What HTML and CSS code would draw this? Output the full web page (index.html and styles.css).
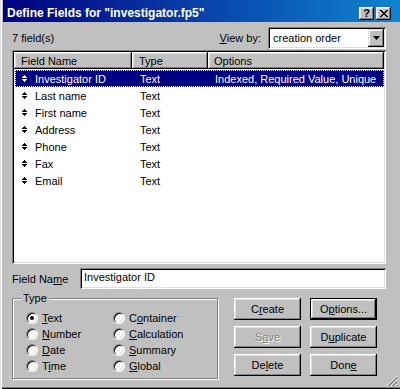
FILE: index.html
```html
<!DOCTYPE html>
<html lang="en">
<head>
    <meta charset="UTF-8">
    <title>Define Fields</title>
    <link rel="stylesheet" href="styles.css">
</head>
<body>
    <div class="window">
        <div class="titlebar">
            <span class="title">Define Fields for "investigator.fp5"</span>
            <div class="caption-btns">
                <span class="cbtn help">?</span>
                <span class="cbtn">
                    <svg width="8" height="7" viewBox="0 0 8 7"><path d="M0 0h2v1h1v1h2v-1h1v-1h2v1h-1v1h-1v1h-1v1h1v1h1v1h1v1h-2v-1h-1v-1h-2v1h-1v1h-2v-1h1v-1h1v-1h1v-1h-1v-1h-1v-1h-1z" fill="#000"/></svg>
                </span>
            </div>
        </div>

        <div class="content">
            <div class="toprow">
                <span>7 field(s)</span>
                <div class="viewby">
                    <span><u>V</u>iew by:</span>
                    <div class="combo">
                        <span class="combo-text">creation order</span>
                        <span class="combo-arrow">
                            <svg width="7" height="4" viewBox="0 0 7 4"><path d="M0 0h7l-3.5 4z" fill="#000"/></svg>
                        </span>
                    </div>
                </div>
            </div>

            <div class="list">
                <div class="list-head">
                    <div class="hcol col-name">Field Name</div>
                    <div class="hcol col-type">Type</div>
                    <div class="hcol col-opts">Options</div>
                </div>
                <div class="rows">
                    <div class="row selected">
                        <div class="col-name"><span class="handle"></span>Investigator ID</div>
                        <div class="col-type">Text</div>
                        <div class="col-opts">Indexed, Required Value, Unique</div>
                    </div>
                    <div class="row">
                        <div class="col-name"><span class="handle"></span>Last name</div>
                        <div class="col-type">Text</div>
                        <div class="col-opts"></div>
                    </div>
                    <div class="row">
                        <div class="col-name"><span class="handle"></span>First name</div>
                        <div class="col-type">Text</div>
                        <div class="col-opts"></div>
                    </div>
                    <div class="row">
                        <div class="col-name"><span class="handle"></span>Address</div>
                        <div class="col-type">Text</div>
                        <div class="col-opts"></div>
                    </div>
                    <div class="row">
                        <div class="col-name"><span class="handle"></span>Phone</div>
                        <div class="col-type">Text</div>
                        <div class="col-opts"></div>
                    </div>
                    <div class="row">
                        <div class="col-name"><span class="handle"></span>Fax</div>
                        <div class="col-type">Text</div>
                        <div class="col-opts"></div>
                    </div>
                    <div class="row">
                        <div class="col-name"><span class="handle"></span>Email</div>
                        <div class="col-type">Text</div>
                        <div class="col-opts"></div>
                    </div>
                </div>
            </div>

            <div class="namerow">
                <span class="namelabel">Field Na<u>m</u>e</span>
                <div class="textbox">Investigator ID</div>
            </div>

            <div class="bottom">
                <div class="typebox">
                    <span class="legend">Type</span>
                    <div class="radios">
                        <label class="radio-item"><span class="radio checked"></span><span><u>T</u>ext</span></label>
                        <label class="radio-item"><span class="radio"></span><span>C<u>o</u>ntainer</span></label>
                        <label class="radio-item"><span class="radio"></span><span><u>N</u>umber</span></label>
                        <label class="radio-item"><span class="radio"></span><span><u>C</u>alculation</span></label>
                        <label class="radio-item"><span class="radio"></span><span><u>D</u>ate</span></label>
                        <label class="radio-item"><span class="radio"></span><span><u>S</u>ummary</span></label>
                        <label class="radio-item"><span class="radio"></span><span>T<u>i</u>me</span></label>
                        <label class="radio-item"><span class="radio"></span><span><u>G</u>lobal</span></label>
                    </div>
                </div>

                <div class="buttons">
                    <button class="btn">C<u>r</u>eate</button>
                    <button class="btn default">O<u>p</u>tions...</button>
                    <button class="btn disabled">S<u>a</u>ve</button>
                    <button class="btn">D<u>u</u>plicate</button>
                    <button class="btn">De<u>l</u>ete</button>
                    <button class="btn">Don<u>e</u></button>
                </div>
            </div>
        </div>

        <svg class="grip" width="12" height="12" viewBox="0 0 12 12">
            <path d="M11 1L1 11M11 5L5 11M11 9L9 11" stroke="#fff" stroke-width="1"/>
            <path d="M11 2L2 11M11 3L3 11M11 6L6 11M11 7L7 11M11 10L10 11" stroke="#808080" stroke-width="1"/>
        </svg>
    </div>
</body>
</html>
```

FILE: styles.css
```css
body {
    margin: 0;
    font-family: "Liberation Sans", Arial, sans-serif;
    font-size: 11px;
    color: #000;
    background-color: #c0c0c0;
}
.window {
    position: relative;
    width: 400px;
    height: 389px;
    box-sizing: border-box;
    background-color: #c0c0c0;
    box-shadow: inset 1px 0 #dfdfdf, inset 2px 0 #fff, inset 0 -1px #000, inset 0 -2px #808080;
}
.titlebar {
    display: flex;
    align-items: center;
    height: 22px;
    box-sizing: border-box;
    padding: 4px 0 0 4px;
    margin-left: 3px;
    background: linear-gradient(to right, #000080, #1084d0);
    color: #fff;
}
.title {
    font-weight: bold;
    font-size: 12px;
}
.caption-btns {
    display: flex;
    gap: 2px;
    margin-left: auto;
    margin-right: 9px;
}
.cbtn {
    display: flex;
    align-items: center;
    justify-content: center;
    width: 15px;
    height: 13px;
    background-color: #c0c0c0;
    box-shadow: inset -1px -1px #000, inset 1px 1px #fff, inset -2px -2px #808080, inset 2px 2px #dfdfdf;
}
.cbtn.help {
    color: #000;
    font-weight: bold;
    font-size: 11px;
    line-height: 13px;
}
.content {
    padding: 0 14px 0 12px;
}
.toprow {
    display: flex;
    align-items: center;
    justify-content: space-between;
    height: 22px;
    padding-top: 5px;
}
.viewby {
    display: flex;
    align-items: center;
    gap: 7px;
}
.combo {
    display: flex;
    align-items: center;
    width: 118px;
    height: 22px;
    box-sizing: border-box;
    padding: 2px;
    background-color: #fff;
    box-shadow: inset 1px 1px #808080, inset -1px -1px #fff, inset 2px 2px #000, inset -2px -2px #dfdfdf;
}
.combo-text {
    flex: 1;
    padding-left: 3px;
}
.combo-arrow {
    display: flex;
    align-items: center;
    justify-content: center;
    width: 16px;
    height: 18px;
    background-color: #c0c0c0;
    box-shadow: inset -1px -1px #000, inset 1px 1px #dfdfdf, inset -2px -2px #808080, inset 2px 2px #fff;
}
.list {
    height: 214px;
    margin-top: 1px;
    box-sizing: border-box;
    padding: 2px;
    background-color: #fff;
    box-shadow: inset 1px 1px #808080, inset -1px -1px #fff, inset 2px 2px #000, inset -2px -2px #dfdfdf;
}
.list-head {
    display: flex;
    height: 17px;
}
.hcol {
    display: flex;
    align-items: center;
    box-sizing: border-box;
    background-color: #c0c0c0;
    box-shadow: inset -1px -1px #000, inset 1px 1px #fff, inset -2px -2px #808080, inset 2px 2px #dfdfdf;
}
.col-name {
    width: 118px;
    padding-left: 7px;
    box-sizing: border-box;
    display: flex;
    align-items: center;
}
.col-type {
    width: 76px;
    padding-left: 7px;
    box-sizing: border-box;
}
.col-opts {
    flex: 1;
    padding-left: 6px;
    box-sizing: border-box;
}
.rows {
    padding-top: 1px;
}
.row {
    display: flex;
    align-items: center;
    height: 17px;
    box-sizing: border-box;
    margin-left: 1px;
    border: 1px solid transparent;
}
.row .col-name {
    width: 117px;
    padding-left: 6px;
}
.row.selected {
    background-color: #000080;
    color: #fff;
    border: 1px dotted #ffff80;
}
.handle {
    width: 5px;
    height: 7px;
    margin-right: 8px;
    background:
        linear-gradient(#000, #000) 2px 0 / 1px 1px no-repeat,
        linear-gradient(#000, #000) 1px 1px / 3px 1px no-repeat,
        linear-gradient(#000, #000) 0 2px / 5px 1px no-repeat,
        linear-gradient(#000, #000) 0 4px / 5px 1px no-repeat,
        linear-gradient(#000, #000) 1px 5px / 3px 1px no-repeat,
        linear-gradient(#000, #000) 2px 6px / 1px 1px no-repeat;
}
.selected .handle {
    background:
        linear-gradient(#fff, #fff) 2px 0 / 1px 1px no-repeat,
        linear-gradient(#fff, #fff) 1px 1px / 3px 1px no-repeat,
        linear-gradient(#fff, #fff) 0 2px / 5px 1px no-repeat,
        linear-gradient(#fff, #fff) 0 4px / 5px 1px no-repeat,
        linear-gradient(#fff, #fff) 1px 5px / 3px 1px no-repeat,
        linear-gradient(#fff, #fff) 2px 6px / 1px 1px no-repeat;
}
.namerow {
    display: flex;
    align-items: center;
    margin-top: 4px;
}
.namelabel {
    width: 68px;
}
.textbox {
    flex: 1;
    height: 21px;
    box-sizing: border-box;
    padding: 3px 4px;
    background-color: #fff;
    box-shadow: inset 1px 1px #808080, inset -1px -1px #fff, inset 2px 2px #000, inset -2px -2px #dfdfdf;
}
.bottom {
    display: flex;
    margin-top: 9px;
}
.typebox {
    position: relative;
    width: 206px;
    height: 81px;
    box-sizing: border-box;
    border: 1px solid #808080;
    box-shadow: inset 1px 1px #fff, 1px 1px #fff;
    padding: 13px 0 0 13px;
}
.legend {
    position: absolute;
    top: -7px;
    left: 8px;
    padding: 0 2px;
    background-color: #c0c0c0;
}
.radios {
    display: grid;
    grid-template-columns: 87px auto;
    row-gap: 4px;
}
.radio-item {
    display: flex;
    align-items: center;
    gap: 4px;
    height: 12px;
}
.radio {
    position: relative;
    width: 12px;
    height: 12px;
    box-sizing: border-box;
    border-radius: 50%;
    border: 1px solid;
    border-color: #808080 #fff #fff #808080;
    background-color: #fff;
    box-shadow: inset 1px 1px #000, inset -1px -1px #dfdfdf;
}
.radio.checked::after {
    content: "";
    position: absolute;
    left: 3px;
    top: 3px;
    width: 4px;
    height: 4px;
    border-radius: 50%;
    background-color: #000;
}
.buttons {
    display: grid;
    grid-template-columns: 67px 67px;
    grid-auto-rows: 22px;
    column-gap: 9px;
    row-gap: 6px;
    margin-left: 16px;
}
.btn {
    font-family: inherit;
    font-size: 11px;
    color: #000;
    padding: 0;
    border: none;
    background-color: #c0c0c0;
    box-shadow: inset -1px -1px #000, inset 1px 1px #fff, inset -2px -2px #808080, inset 2px 2px #dfdfdf;
}
.btn.default {
    box-shadow: inset 0 0 0 1px #000, inset -2px -2px #000, inset 2px 2px #fff, inset -3px -3px #808080, inset 3px 3px #dfdfdf;
}
.btn.disabled {
    color: #808080;
    text-shadow: 1px 1px #fff;
}
.grip {
    position: absolute;
    right: 2px;
    bottom: 2px;
}
```
